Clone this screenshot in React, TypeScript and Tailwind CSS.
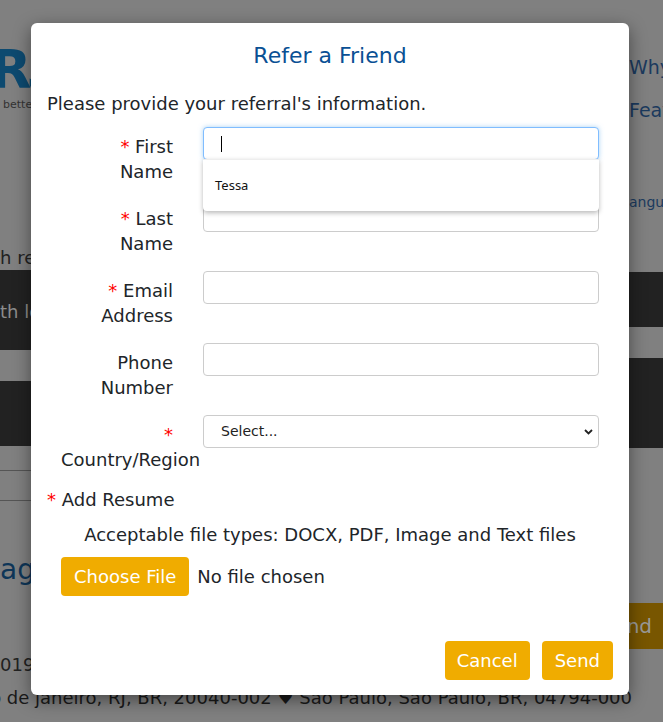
import React from "react";

const fieldRows: Array<{ lines: [string, string]; required: boolean; kind?: "select" | "focus" }> = [
  { lines: ["First", "Name"], required: true, kind: "focus" },
  { lines: ["Last", "Name"], required: true },
  { lines: ["Email", "Address"], required: true },
  { lines: ["Phone", "Number"], required: false },
  { lines: ["", "Country/Region"], required: true, kind: "select" },
];

function Star() {
  return <span className="text-[#ff0000]">*</span>;
}

function Backdrop() {
  return (
    <div className="flex h-full flex-col">
      <div className="flex h-[688px] justify-between">
        {/* left edge of the page behind the dialog */}
        <div className="flex w-[31px] flex-col overflow-hidden whitespace-nowrap">
          <div className="mt-[44px] -ml-[10px] h-[52px] text-[54px] font-bold leading-[52px] tracking-[-6px] text-[#0d4a70]">
            R5
          </div>
          <div className="mt-[2px] pl-[3px] text-[11px] leading-[14px] text-[#333]">better</div>
          <div className="mt-[134px] text-[18px] leading-[24px] text-[#222]">h re</div>
          <div className="flex h-[80px] items-end bg-[#222] pb-[26px] text-[18px] leading-[24px] text-[#8c8c8c]">
            th lo
          </div>
          <div className="h-[31px]" />
          <div className="h-[65px] bg-[#222]" />
          <div className="mt-[24px] h-px bg-[#555]" />
          <div className="mt-[29px] h-px bg-[#555]" />
          <div className="mt-[52px] text-[28px] leading-[34px] text-[#0e3658]">ag</div>
          <div className="mt-[66px] text-[18px] leading-[24px] text-[#222]">019</div>
        </div>

        {/* right edge of the page behind the dialog */}
        <div className="flex w-[34px] flex-col overflow-hidden whitespace-nowrap">
          <div className="mt-[55px] text-[19px] leading-[24px] text-[#1b3a5e]">Why</div>
          <div className="mt-[19px] text-[19px] leading-[24px] text-[#1b3a5e]">Feat</div>
          <div className="mt-[70px] text-[14px] leading-[20px] text-[#1b3a5e]">angua</div>
          <div className="mt-[60px] h-[55px] bg-[#222]" />
          <div className="h-[31px]" />
          <div className="h-[90px] bg-[#222]" />
          <div className="relative mt-[155px] h-[46px] bg-[#f0ac00]">
            <div className="flex h-full items-center justify-end bg-black/50 pr-[11px] text-[20px] text-[#9a9a9a]">
              Send
            </div>
          </div>
        </div>
      </div>
      <div className="flex justify-end overflow-hidden whitespace-nowrap pr-[31px] text-[18px] leading-[20px] text-[#1a1a1a]">
        Rio de janeiro, RJ, BR, 20040-002 ♥ São Paulo, São Paulo, BR, 04794-000
      </div>
    </div>
  );
}

function Field({ kind }: { kind?: "select" | "focus" }) {
  if (kind === "select") {
    return (
      <div className="relative h-[33px] w-[396px]">
        <select className="h-full w-full appearance-none rounded-[4px] border border-[#cccccc] bg-white pl-[17px] text-[14px] text-[#222]">
          <option>Select...</option>
        </select>
        <svg className="pointer-events-none absolute right-[6px] top-[14px]" width="9" height="6" viewBox="0 0 9 6">
          <path d="M1 1l3.5 3.5L8 1" fill="none" stroke="#222" strokeWidth="1.8" />
        </svg>
      </div>
    );
  }
  if (kind === "focus") {
    return (
      <div className="relative h-[33px] w-[396px]">
        <input
          className="h-full w-full rounded-[4px] border border-[#80bdff] bg-white shadow-[0_0_5px_rgba(102,175,233,0.55)] outline-none"
          readOnly
        />
        <span className="absolute left-[18px] top-[9px] h-[16px] w-px bg-black" />
        <div className="absolute left-0 top-[32px] z-10 flex h-[52px] w-full items-center rounded-b-[4px] border-t border-[#eeeeee] bg-white pl-[12px] font-['Noto_Sans',sans-serif] text-[13px] text-[#111] shadow-[0_2px_5px_rgba(0,0,0,0.28)]">
          Tessa
        </div>
      </div>
    );
  }
  return (
    <input
      className="h-[33px] w-[396px] rounded-[4px] border border-[#cccccc] bg-white outline-none"
      readOnly
    />
  );
}

function ReferDialog() {
  return (
    <div className="absolute left-[31px] top-[23px] flex h-[672px] w-[598px] flex-col rounded-[6px] bg-white px-4 pb-[15px] pt-[16px] shadow-[0_5px_18px_rgba(0,0,0,0.45)]">
      <h2 className="text-center text-[22px] leading-[33px] text-[#0a5094]">Refer a Friend</h2>
      <p className="mt-[19px] text-[18px] leading-[25px] text-[#212529]">
        Please provide your referral's information.
      </p>

      <div className="mt-[11px]">
        {fieldRows.map((row) => (
          <div key={row.lines[1]} className="mb-[15px] flex items-start">
            <div className="ml-[14px] w-[112px] pt-[7px] text-right text-[18px] leading-[25px] text-[#212529]">
              <span className="block whitespace-nowrap">
                {row.required && <Star />}
                {row.required && row.lines[0] ? " " : ""}
                {row.lines[0]}
              </span>
              <span className={row.kind === "select" ? "block whitespace-nowrap text-left" : "block whitespace-nowrap"}>
                {row.lines[1]}
              </span>
            </div>
            <div className="ml-[30px]">
              <Field kind={row.kind} />
            </div>
          </div>
        ))}
      </div>

      <div className="text-[18px] leading-[25px] text-[#212529]">
        <Star /> Add Resume
      </div>
      <div className="mt-[10px] text-center text-[18px] leading-[25px] text-[#212529]">
        Acceptable file types: DOCX, PDF, Image and Text files
      </div>
      <div className="ml-[14px] mt-[10px] flex items-center">
        <button className="h-[39px] rounded-[4px] bg-[#f0ac00] px-[13px] text-[18px] leading-[25px] text-white">
          Choose File
        </button>
        <span className="ml-[8px] text-[18px] leading-[25px] text-[#212529]">No file chosen</span>
      </div>

      <div className="mt-auto flex justify-end gap-[12px]">
        <button className="h-[39px] rounded-[4px] bg-[#f0ac00] px-[12px] text-[18px] leading-[25px] text-white">
          Cancel
        </button>
        <button className="h-[39px] rounded-[4px] bg-[#f0ac00] px-[13px] text-[18px] leading-[25px] text-white">
          Send
        </button>
      </div>
    </div>
  );
}

export default function App() {
  return (
    <div className="relative h-[722px] w-full overflow-hidden bg-[#808080] font-['DejaVu_Sans',sans-serif]">
      <Backdrop />
      <ReferDialog />
    </div>
  );
}
